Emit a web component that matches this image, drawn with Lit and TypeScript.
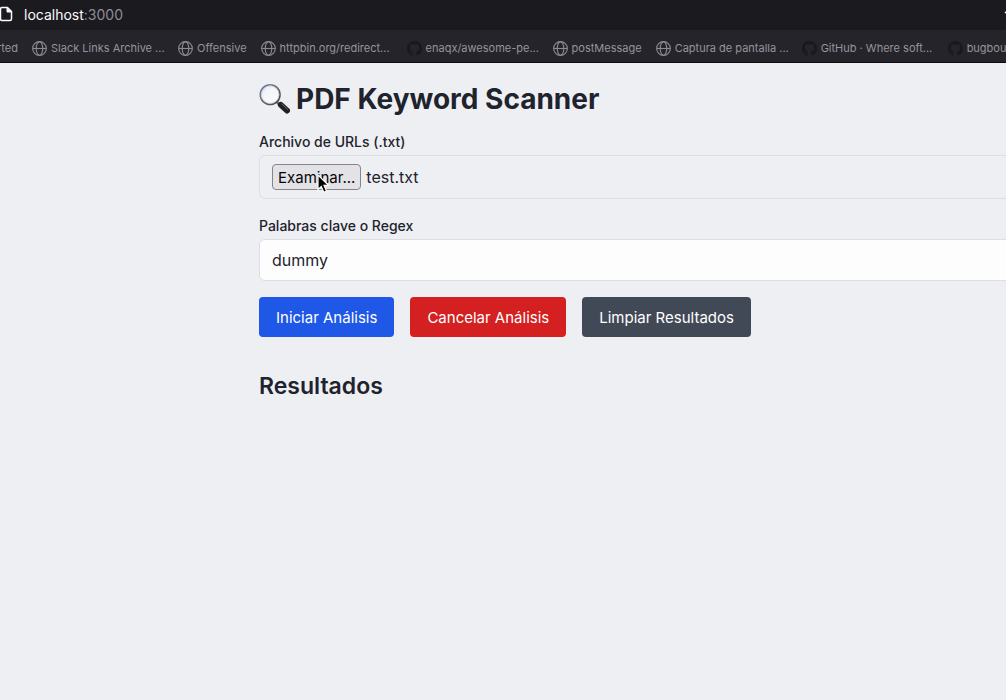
import { LitElement, html, css, svg } from "lit";
import { customElement, state, query } from "lit/decorators.js";
import { classMap } from "lit/directives/class-map.js";

interface Bookmark {
  title: string;
  icon: "globe" | "github";
  long?: boolean;
}

const BOOKMARKS: Bookmark[] = [
  { title: "Slack Links Archive ...", icon: "globe", long: true },
  { title: "Offensive", icon: "globe" },
  { title: "httpbin.org/redirect...", icon: "globe", long: true },
  { title: "enaqx/awesome-pe...", icon: "github", long: true },
  { title: "postMessage", icon: "globe" },
  { title: "Captura de pantalla ...", icon: "globe", long: true },
  { title: "GitHub · Where soft...", icon: "github", long: true },
  { title: "bugbou", icon: "github" },
];

const globe = svg`<g fill="none" stroke="#8b8a90" stroke-width="1.2">
  <circle cx="8" cy="8" r="7.300"/><ellipse cx="8" cy="8" rx="3.500" ry="7.300"/>
  <path d="M1 8h14"/></g>`;

const github = svg`<path fill="#19181d" d="M8 0C3.58 0 0 3.58 0 8c0 3.54 2.29 6.53 5.47 7.59.4.07.55-.17.55-.38 0-.19-.01-.82-.01-1.49-2.01.37-2.53-.49-2.69-.94-.09-.23-.48-.94-.82-1.13-.28-.15-.68-.52-.01-.53.63-.01 1.08.58 1.23.82.72 1.21 1.87.87 2.33.66.07-.52.28-.87.51-1.07-1.78-.2-3.64-.89-3.64-3.95 0-.87.31-1.59.82-2.15-.08-.2-.36-1.02.08-2.12 0 0 .67-.21 2.2.82.64-.18 1.32-.27 2-.27s1.36.09 2 .27c1.53-1.04 2.2-.82 2.2-.82.44 1.1.16 1.92.08 2.12.51.56.82 1.27.82 2.15 0 3.07-1.87 3.75-3.65 3.95.29.25.54.73.54 1.48 0 1.07-.01 1.93-.01 2.2 0 .21.15.46.55.38A8.01 8.01 0 0 0 16 8c0-4.42-3.58-8-8-8z"/>`;

@customElement("browser-bar")
export class BrowserBar extends LitElement {
  static styles = css`
    :host {
      display: block;
      overflow: hidden;
      border-bottom: 1px solid #0c0c0f;
    }
    .address {
      display: flex;
      align-items: center;
      box-sizing: border-box;
      height: 30px;
      padding-bottom: 2px;
      background: #1b1a1e;
      color: #fbfbfe;
      font-size: 14px;
    }
    .page {
      width: 16px;
      height: 16px;
      margin-left: -2px;
      margin-right: 10px;
    }
    .port {
      color: #8f8e94;
    }
    .star {
      width: 16px;
      height: 16px;
      margin-left: auto;
      margin-right: -14px;
    }
    .bookmarks {
      display: flex;
      align-items: center;
      gap: 14px;
      height: 32px;
      padding-top: 4px;
      box-sizing: border-box;
      background: #25242a;
      font-size: 11px;
      font-weight: 400;
      overflow: hidden;
    }
    .bookmark {
      display: flex;
      flex: none;
      align-items: center;
      gap: 4px;
      color: #95949a;
      text-decoration: none;
      white-space: nowrap;
    }
    .long {
      width: 132px;
    }
    .cut {
      width: 18px;
      justify-content: flex-end;
    }
    .icon {
      flex: none;
      width: 15px;
      height: 15px;
    }
  `;

  render() {
    return html`
      <div class="address">
        <svg class="page" viewBox="0 0 16 16" fill="none" stroke="#fbfbfe" stroke-width="1.500" stroke-linejoin="round">
          <path d="M4 1.500h5.500L13.500 5.500v7.500a1.500 1.500 0 0 1-1.500 1.500H4A1.500 1.500 0 0 1 2.500 13V3A1.500 1.500 0 0 1 4 1.500z"/>
          <path d="M9 1.500V6H13.500z" fill="#fbfbfe" stroke-width="1"/>
        </svg>
        <span>localhost<span class="port">:3000</span></span>
        <svg class="star" viewBox="0 0 16 16" fill="none" stroke="#fbfbfe" stroke-width="1.300" stroke-linejoin="round">
          <path d="M8 1.500l2 4.300 4.700.5-3.500 3.200 1 4.700L8 11.800l-4.200 2.400 1-4.700L1.300 6.300 6 5.800z"/>
        </svg>
      </div>
      <nav class="bookmarks">
        <a class="bookmark cut" href="#">rted</a>
        ${BOOKMARKS.map(
          (b) => html`<a class=${classMap({ bookmark: true, long: !!b.long })} href="#">
            <svg class="icon" viewBox="0 0 16 16">${b.icon === "globe" ? globe : github}</svg>
            <span>${b.title}</span>
          </a>`
        )}
      </nav>
    `;
  }
}

@customElement("app-root")
export class AppRoot extends LitElement {
  static styles = css`
    :host {
      display: block;
      min-height: 100vh;
      overflow: hidden;
      background: #eeeff3;
      color: #1e232d;
      font-family: Inter, "Liberation Sans", sans-serif;
    }
    .content {
      padding-top: 18px;
      margin-left: 259px;
      margin-right: -16px;
    }
    .title {
      display: flex;
      align-items: center;
      gap: 6px;
      margin: 0 0 15px;
      font-size: 28px;
      line-height: 36px;
      font-weight: 700;
    }
    .glass {
      width: 31px;
      height: 31px;
    }
    .label {
      display: block;
      margin-bottom: 3px;
      font-size: 14px;
      line-height: 20px;
      font-weight: 500;
    }
    .field {
      display: flex;
      align-items: center;
      box-sizing: border-box;
      width: 100%;
      height: 42px;
      padding: 8px 12px;
      border: 1px solid #dddee3;
      border-radius: 6px;
      background: #fdfdfe;
      color: inherit;
      font: inherit;
      font-size: 16px;
    }
    .file {
      position: relative;
      gap: 5px;
      height: 44px;
      margin-bottom: 17px;
      background: transparent;
    }
    .picker {
      position: absolute;
      width: 1px;
      height: 1px;
      opacity: 0;
      pointer-events: none;
    }
    .browse {
      position: relative;
      height: 26px;
      padding: 0 5px;
      border: 1px solid #85858c;
      border-radius: 4px;
      background: #e2e2e7;
      color: #050507;
      font: inherit;
      font-size: 15px;
    }
    .cursor {
      position: absolute;
      left: 44px;
      top: 9px;
      width: 13px;
      height: 20px;
    }
    .actions {
      display: flex;
      gap: 16px;
      margin: 16px 0 33px;
    }
    .action {
      height: 40px;
      padding: 0 17px;
      border: 0;
      border-radius: 4px;
      color: #fff;
      font: inherit;
      font-size: 15px;
    }
    .start {
      background: #1f57e7;
    }
    .cancel {
      background: #d42021;
    }
    .clear {
      background: #424956;
    }
    .results {
      margin: 0;
      font-size: 23px;
      line-height: 32px;
      font-weight: 600;
    }
  `;

  @state() private fileName = "test.txt";
  @state() private keywords = "dummy";
  @query(".picker") private picker!: HTMLInputElement;

  private onFile() {
    this.fileName = this.picker.files?.[0]?.name ?? this.fileName;
  }

  render() {
    return html`
      <browser-bar></browser-bar>
      <main class="content">
        <h1 class="title">
          <svg class="glass" viewBox="0 0 32 32" aria-hidden="true">
            <defs>
              <linearGradient id="rim" x1="0" y1="0" x2="1" y2="1">
                <stop offset="0" stop-color="#5376bd"/>
                <stop offset=".3" stop-color="#777980"/>
                <stop offset="1" stop-color="#3f4044"/>
              </linearGradient>
              <linearGradient id="lens" x1="0" y1="0" x2="1" y2="1">
                <stop offset="0" stop-color="#dfe3ed"/>
                <stop offset=".4" stop-color="#f6f6f8"/>
                <stop offset="1" stop-color="#fafafa"/>
              </linearGradient>
            </defs>
            <path d="M18.500 18.500l4 4" stroke="#77787c" stroke-width="3"/>
            <path d="M22.500 21.500l6.500 6" stroke="#202124" stroke-width="6" stroke-linecap="round"/>
            <path d="M23.500 20.500l6 5.500" stroke="#67686c" stroke-width="1" stroke-linecap="round"/>
            <circle cx="11.500" cy="11" r="10.200" fill="url(#lens)" stroke="url(#rim)" stroke-width="1.600"/>
            <circle cx="11.500" cy="11" r="9" fill="none" stroke="#c8c9cd" stroke-width=".8"/>
          </svg>
          <span>PDF Keyword Scanner</span>
        </h1>

        <label class="label" for="urls">Archivo de URLs (.txt)</label>
        <div class="field file">
          <input class="picker" id="urls" type="file" accept=".txt" tabindex="-1" @change=${this.onFile} />
          <button class="browse" type="button" @click=${() => this.picker.click()}>
            Examinar...
            <svg class="cursor" viewBox="0 0 13 20" aria-hidden="true">
              <path d="M1 1v14.500l3.300-3.100 2.500 5.800 2.700-1.200-2.500-5.600h4.500z" fill="#000" stroke="#fff" stroke-width="1.200"/>
            </svg>
          </button>
          <span>${this.fileName}</span>
        </div>

        <label class="label" for="keywords">Palabras clave o Regex</label>
        <input
          class="field"
          id="keywords"
          type="text"
          .value=${this.keywords}
          @input=${(e: Event) => (this.keywords = (e.target as HTMLInputElement).value)}
        />

        <div class="actions">
          <button class="action start" type="button">Iniciar Análisis</button>
          <button class="action cancel" type="button">Cancelar Análisis</button>
          <button class="action clear" type="button" @click=${() => (this.keywords = "")}>Limpiar Resultados</button>
        </div>

        <h2 class="results">Resultados</h2>
      </main>
    `;
  }
}
